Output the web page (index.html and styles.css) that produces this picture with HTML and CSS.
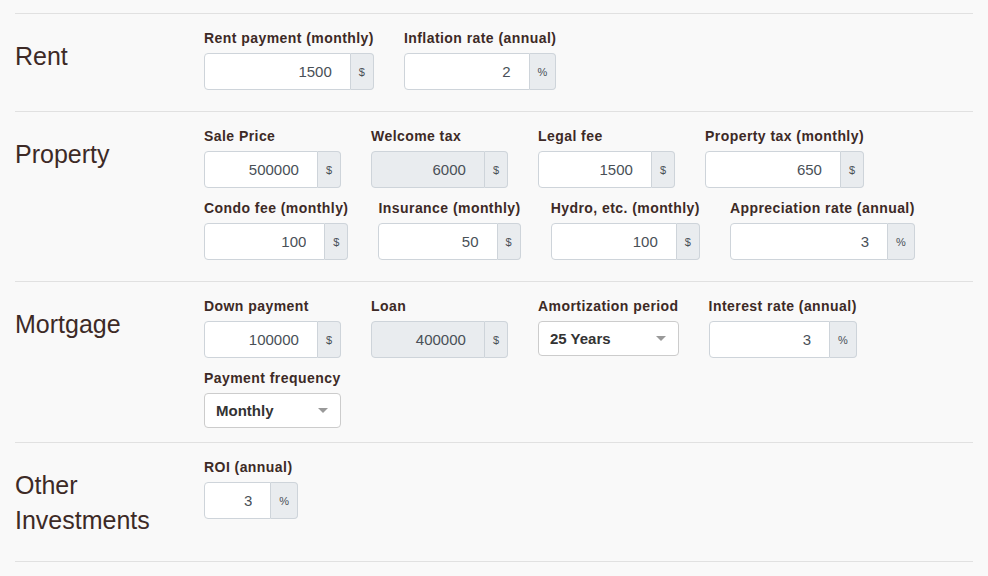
FILE: index.html
```html
<!DOCTYPE html>
<html lang="en">
<head>
  <meta charset="UTF-8">
  <title>Rent vs Buy</title>
  <link rel="stylesheet" href="styles.css">
</head>
<body>

<div class="calc">

  <div class="group">
    <h2 class="group-title">Rent</h2>
    <div class="fields">
      <div class="field">
        <label>Rent payment (monthly)</label>
        <div class="input-group">
          <input type="text" value="1500">
          <span class="addon">$</span>
        </div>
      </div>
      <div class="field">
        <label>Inflation rate (annual)</label>
        <div class="input-group">
          <input type="text" value="2">
          <span class="addon">%</span>
        </div>
      </div>
    </div>
  </div>

  <div class="group">
    <h2 class="group-title">Property</h2>
    <div class="fields">
      <div class="field">
        <label>Sale Price</label>
        <div class="input-group">
          <input type="text" value="500000">
          <span class="addon">$</span>
        </div>
      </div>
      <div class="field">
        <label>Welcome tax</label>
        <div class="input-group">
          <input type="text" value="6000" disabled>
          <span class="addon">$</span>
        </div>
      </div>
      <div class="field">
        <label>Legal fee</label>
        <div class="input-group">
          <input type="text" value="1500">
          <span class="addon">$</span>
        </div>
      </div>
      <div class="field">
        <label>Property tax (monthly)</label>
        <div class="input-group">
          <input type="text" value="650">
          <span class="addon">$</span>
        </div>
      </div>
      <div class="field">
        <label>Condo fee (monthly)</label>
        <div class="input-group">
          <input type="text" value="100">
          <span class="addon">$</span>
        </div>
      </div>
      <div class="field">
        <label>Insurance (monthly)</label>
        <div class="input-group">
          <input type="text" value="50">
          <span class="addon">$</span>
        </div>
      </div>
      <div class="field">
        <label>Hydro, etc. (monthly)</label>
        <div class="input-group">
          <input type="text" value="100">
          <span class="addon">$</span>
        </div>
      </div>
      <div class="field">
        <label>Appreciation rate (annual)</label>
        <div class="input-group">
          <input type="text" value="3">
          <span class="addon">%</span>
        </div>
      </div>
    </div>
  </div>

  <div class="group group-tight">
    <h2 class="group-title">Mortgage</h2>
    <div class="fields">
      <div class="field">
        <label>Down payment</label>
        <div class="input-group">
          <input type="text" value="100000">
          <span class="addon">$</span>
        </div>
      </div>
      <div class="field">
        <label>Loan</label>
        <div class="input-group">
          <input type="text" value="400000" disabled>
          <span class="addon">$</span>
        </div>
      </div>
      <div class="field">
        <label>Amortization period</label>
        <div class="select">
          <span>25 Years</span>
          <span class="caret"></span>
        </div>
      </div>
      <div class="field">
        <label>Interest rate (annual)</label>
        <div class="input-group">
          <input type="text" value="3">
          <span class="addon">%</span>
        </div>
      </div>
      <div class="field">
        <label>Payment frequency</label>
        <div class="select">
          <span>Monthly</span>
          <span class="caret"></span>
        </div>
      </div>
    </div>
  </div>

  <div class="group">
    <h2 class="group-title">Other<br>Investments</h2>
    <div class="fields">
      <div class="field narrow">
        <label>ROI (annual)</label>
        <div class="input-group">
          <input type="text" value="3">
          <span class="addon">%</span>
        </div>
      </div>
    </div>
  </div>

</div>

</body>
</html>
```

FILE: styles.css
```css
body {
  font-family: "Liberation Sans", Arial, sans-serif;
  background-color: #f9f9f9;
  color: #3d2a26;
  margin: 0;
  padding: 0;
}
.calc {
  margin-top: 13px;
  padding: 0 15px;
}
.group {
  display: flex;
  border-top: 1px solid #e1e1e1;
  padding: 15px 0 21px;
}
.group:last-child {
  border-bottom: 1px solid #e1e1e1;
}
.group-tight {
  padding-bottom: 14px;
}
.group-title {
  flex: 0 0 189px;
  margin: 10px 0 2px;
  font-size: 25px;
  line-height: 35px;
  font-weight: normal;
}
.fields {
  flex: 1;
  display: flex;
  flex-wrap: wrap;
  align-items: flex-start;
  column-gap: 30px;
  row-gap: 11px;
}
.field {
  display: flex;
  flex-direction: column;
  min-width: 137px;
}
.field.narrow {
  min-width: 94px;
}
.field label {
  font-size: 14px;
  font-weight: bold;
  line-height: 19px;
  letter-spacing: 0.44px;
  white-space: nowrap;
  margin-bottom: 5px;
}
.input-group {
  display: flex;
  height: 37px;
}
.input-group input {
  flex: 1;
  width: 0;
  min-width: 0;
  box-sizing: border-box;
  height: 37px;
  border: 1px solid #ced4da;
  border-radius: 4px 0 0 4px;
  background-color: white;
  color: #495057;
  font-family: inherit;
  font-size: 15px;
  text-align: right;
  padding: 0 18px 0 8px;
  outline: none;
}
.input-group input:disabled {
  background-color: #e9ecef;
}
.addon {
  display: flex;
  align-items: center;
  padding: 0 8px;
  background-color: #e9ecef;
  border: 1px solid #ced4da;
  border-left: none;
  border-radius: 0 4px 4px 0;
  color: #495057;
  font-size: 11px;
}
.select {
  display: flex;
  align-items: center;
  justify-content: space-between;
  box-sizing: border-box;
  height: 35px;
  padding: 0 12px 0 11px;
  background-color: white;
  border: 1px solid #ccc;
  border-radius: 4px;
  color: #333;
  font-size: 15px;
  font-weight: bold;
}
.caret {
  width: 0;
  height: 0;
  border-left: 5px solid transparent;
  border-right: 5px solid transparent;
  border-top: 5px solid #999;
}
```
